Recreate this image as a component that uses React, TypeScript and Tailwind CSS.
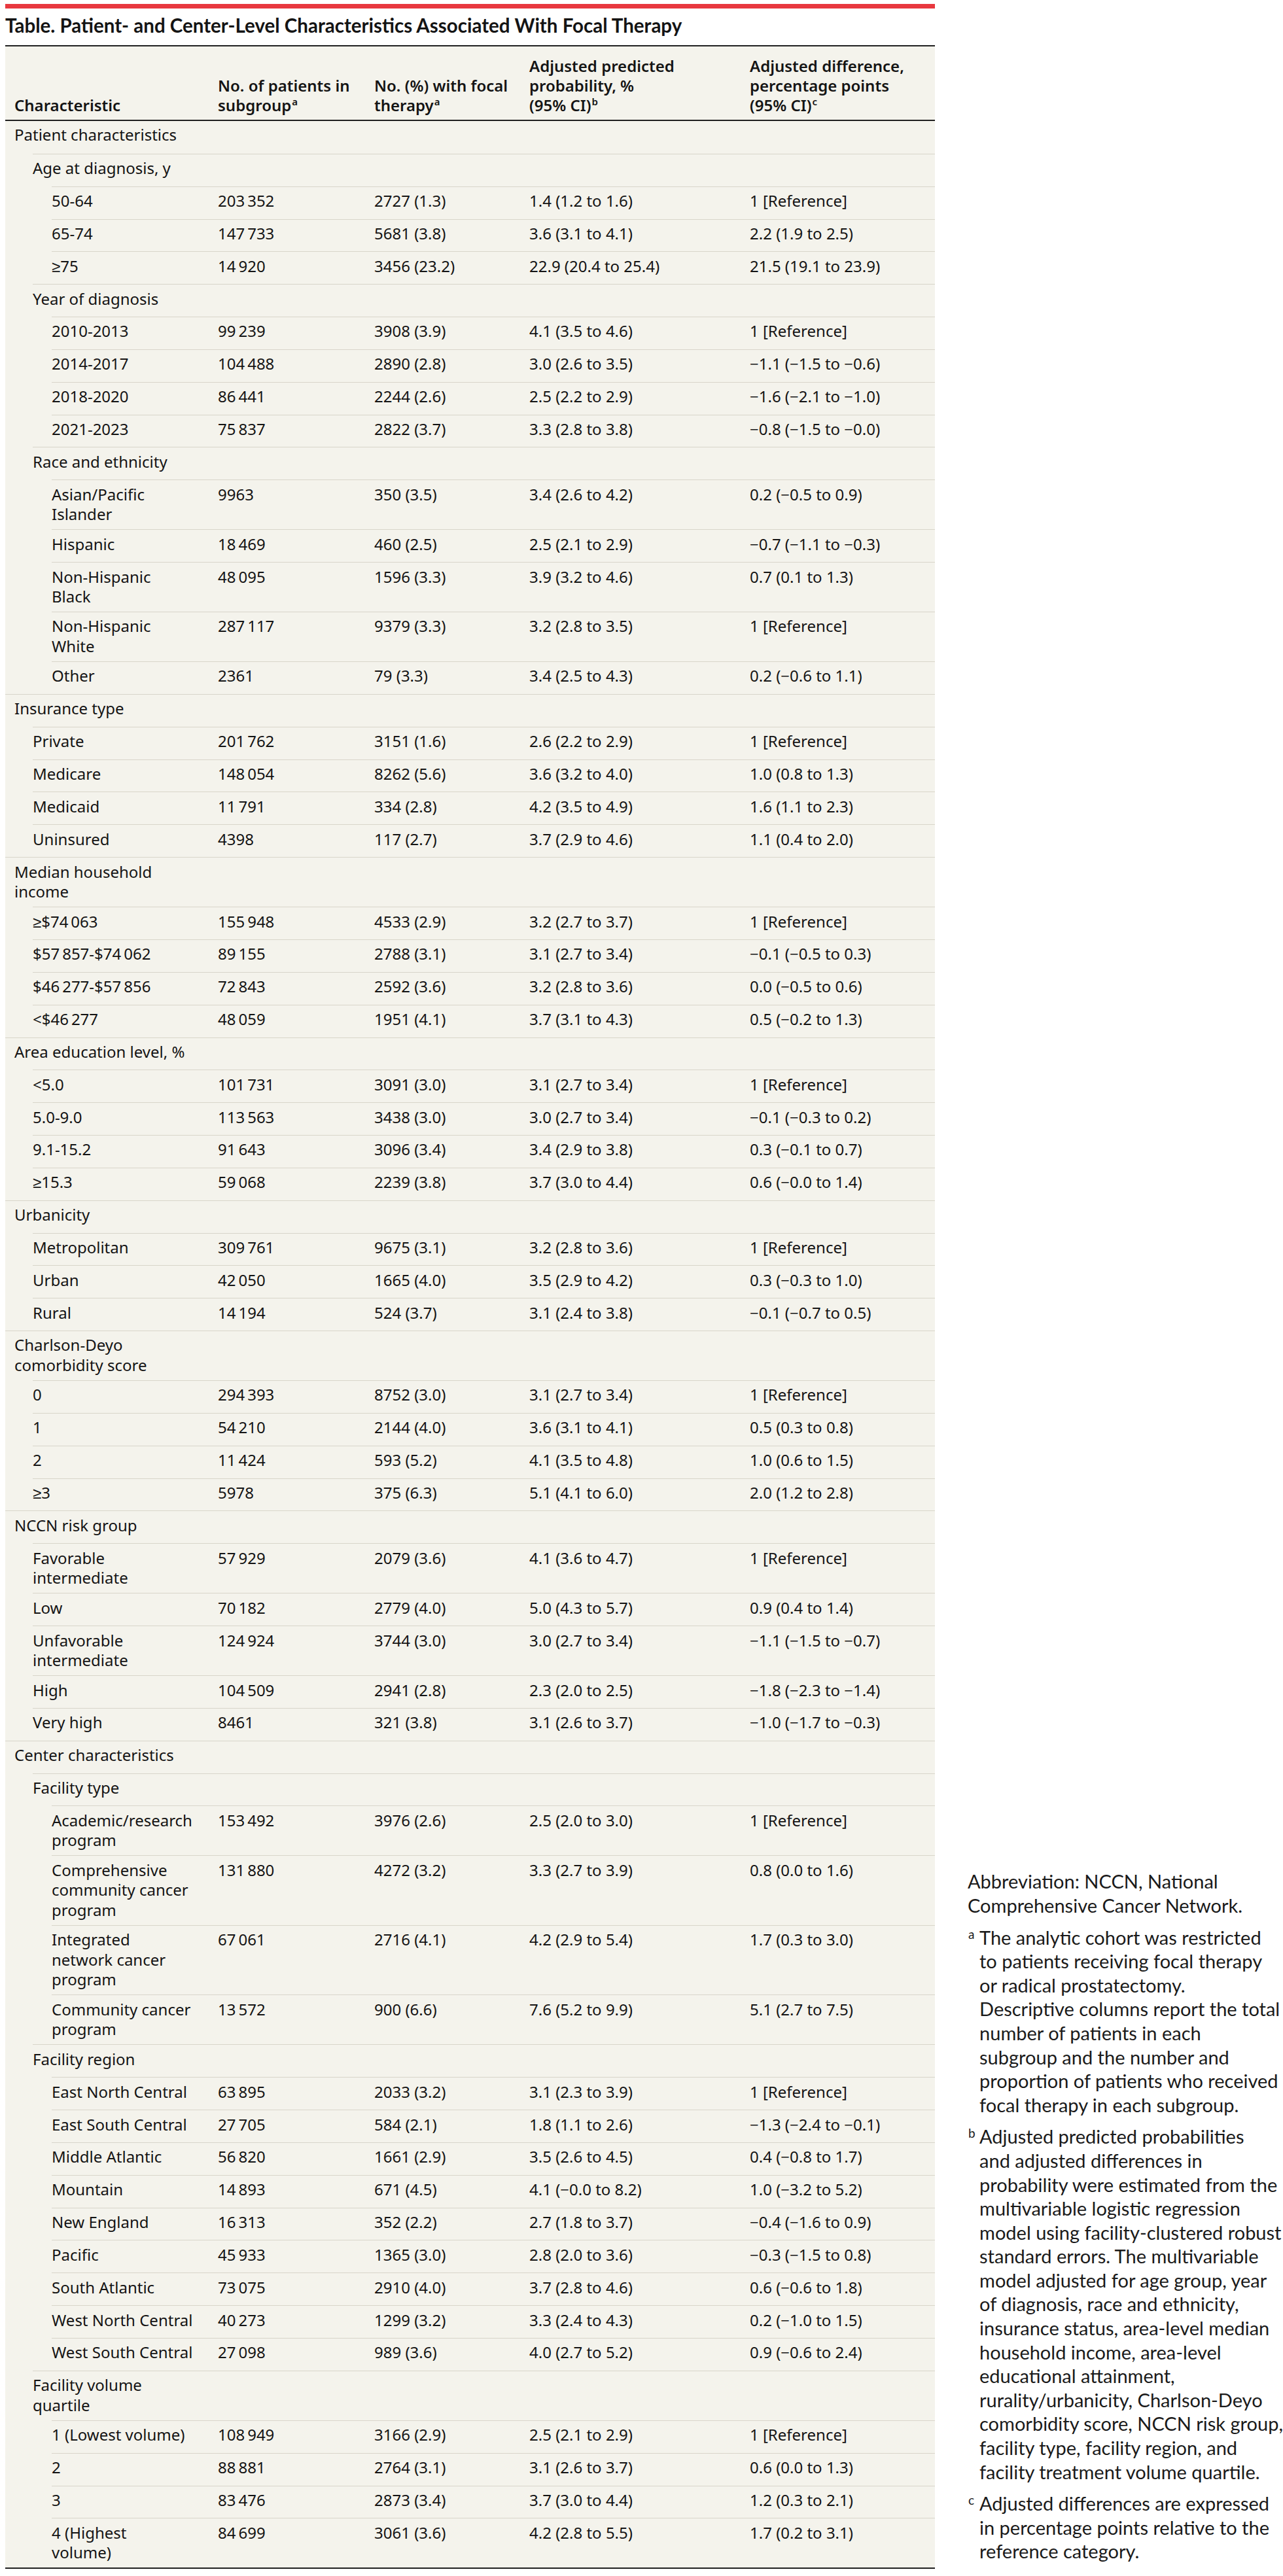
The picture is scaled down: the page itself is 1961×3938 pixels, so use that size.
import React from "react";

type Row = { l: 0 | 1 | 2; c: string | string[]; v?: string[] };

const T = "\u2009";
const n = (s: string) => s.replace(/ (?=\d{3}\b)/g, T);

const rows: Row[] = [
  { l: 0, c: "Patient characteristics" },
  { l: 1, c: "Age at diagnosis, y" },
  { l: 2, c: "50-64", v: ["203 352", "2727 (1.3)", "1.4 (1.2 to 1.6)", "1 [Reference]"] },
  { l: 2, c: "65-74", v: ["147 733", "5681 (3.8)", "3.6 (3.1 to 4.1)", "2.2 (1.9 to 2.5)"] },
  { l: 2, c: "≥75", v: ["14 920", "3456 (23.2)", "22.9 (20.4 to 25.4)", "21.5 (19.1 to 23.9)"] },
  { l: 1, c: "Year of diagnosis" },
  { l: 2, c: "2010-2013", v: ["99 239", "3908 (3.9)", "4.1 (3.5 to 4.6)", "1 [Reference]"] },
  { l: 2, c: "2014-2017", v: ["104 488", "2890 (2.8)", "3.0 (2.6 to 3.5)", "−1.1 (−1.5 to −0.6)"] },
  { l: 2, c: "2018-2020", v: ["86 441", "2244 (2.6)", "2.5 (2.2 to 2.9)", "−1.6 (−2.1 to −1.0)"] },
  { l: 2, c: "2021-2023", v: ["75 837", "2822 (3.7)", "3.3 (2.8 to 3.8)", "−0.8 (−1.5 to −0.0)"] },
  { l: 1, c: "Race and ethnicity" },
  { l: 2, c: ["Asian/Pacific", "Islander"], v: ["9963", "350 (3.5)", "3.4 (2.6 to 4.2)", "0.2 (−0.5 to 0.9)"] },
  { l: 2, c: "Hispanic", v: ["18 469", "460 (2.5)", "2.5 (2.1 to 2.9)", "−0.7 (−1.1 to −0.3)"] },
  { l: 2, c: ["Non-Hispanic", "Black"], v: ["48 095", "1596 (3.3)", "3.9 (3.2 to 4.6)", "0.7 (0.1 to 1.3)"] },
  { l: 2, c: ["Non-Hispanic", "White"], v: ["287 117", "9379 (3.3)", "3.2 (2.8 to 3.5)", "1 [Reference]"] },
  { l: 2, c: "Other", v: ["2361", "79 (3.3)", "3.4 (2.5 to 4.3)", "0.2 (−0.6 to 1.1)"] },
  { l: 0, c: "Insurance type" },
  { l: 1, c: "Private", v: ["201 762", "3151 (1.6)", "2.6 (2.2 to 2.9)", "1 [Reference]"] },
  { l: 1, c: "Medicare", v: ["148 054", "8262 (5.6)", "3.6 (3.2 to 4.0)", "1.0 (0.8 to 1.3)"] },
  { l: 1, c: "Medicaid", v: ["11 791", "334 (2.8)", "4.2 (3.5 to 4.9)", "1.6 (1.1 to 2.3)"] },
  { l: 1, c: "Uninsured", v: ["4398", "117 (2.7)", "3.7 (2.9 to 4.6)", "1.1 (0.4 to 2.0)"] },
  { l: 0, c: ["Median household", "income"] },
  { l: 1, c: "≥$74 063", v: ["155 948", "4533 (2.9)", "3.2 (2.7 to 3.7)", "1 [Reference]"] },
  { l: 1, c: "$57 857-$74 062", v: ["89 155", "2788 (3.1)", "3.1 (2.7 to 3.4)", "−0.1 (−0.5 to 0.3)"] },
  { l: 1, c: "$46 277-$57 856", v: ["72 843", "2592 (3.6)", "3.2 (2.8 to 3.6)", "0.0 (−0.5 to 0.6)"] },
  { l: 1, c: "<$46 277", v: ["48 059", "1951 (4.1)", "3.7 (3.1 to 4.3)", "0.5 (−0.2 to 1.3)"] },
  { l: 0, c: "Area education level, %" },
  { l: 1, c: "<5.0", v: ["101 731", "3091 (3.0)", "3.1 (2.7 to 3.4)", "1 [Reference]"] },
  { l: 1, c: "5.0-9.0", v: ["113 563", "3438 (3.0)", "3.0 (2.7 to 3.4)", "−0.1 (−0.3 to 0.2)"] },
  { l: 1, c: "9.1-15.2", v: ["91 643", "3096 (3.4)", "3.4 (2.9 to 3.8)", "0.3 (−0.1 to 0.7)"] },
  { l: 1, c: "≥15.3", v: ["59 068", "2239 (3.8)", "3.7 (3.0 to 4.4)", "0.6 (−0.0 to 1.4)"] },
  { l: 0, c: "Urbanicity" },
  { l: 1, c: "Metropolitan", v: ["309 761", "9675 (3.1)", "3.2 (2.8 to 3.6)", "1 [Reference]"] },
  { l: 1, c: "Urban", v: ["42 050", "1665 (4.0)", "3.5 (2.9 to 4.2)", "0.3 (−0.3 to 1.0)"] },
  { l: 1, c: "Rural", v: ["14 194", "524 (3.7)", "3.1 (2.4 to 3.8)", "−0.1 (−0.7 to 0.5)"] },
  { l: 0, c: ["Charlson-Deyo", "comorbidity score"] },
  { l: 1, c: "0", v: ["294 393", "8752 (3.0)", "3.1 (2.7 to 3.4)", "1 [Reference]"] },
  { l: 1, c: "1", v: ["54 210", "2144 (4.0)", "3.6 (3.1 to 4.1)", "0.5 (0.3 to 0.8)"] },
  { l: 1, c: "2", v: ["11 424", "593 (5.2)", "4.1 (3.5 to 4.8)", "1.0 (0.6 to 1.5)"] },
  { l: 1, c: "≥3", v: ["5978", "375 (6.3)", "5.1 (4.1 to 6.0)", "2.0 (1.2 to 2.8)"] },
  { l: 0, c: "NCCN risk group" },
  { l: 1, c: ["Favorable", "intermediate"], v: ["57 929", "2079 (3.6)", "4.1 (3.6 to 4.7)", "1 [Reference]"] },
  { l: 1, c: "Low", v: ["70 182", "2779 (4.0)", "5.0 (4.3 to 5.7)", "0.9 (0.4 to 1.4)"] },
  { l: 1, c: ["Unfavorable", "intermediate"], v: ["124 924", "3744 (3.0)", "3.0 (2.7 to 3.4)", "−1.1 (−1.5 to −0.7)"] },
  { l: 1, c: "High", v: ["104 509", "2941 (2.8)", "2.3 (2.0 to 2.5)", "−1.8 (−2.3 to −1.4)"] },
  { l: 1, c: "Very high", v: ["8461", "321 (3.8)", "3.1 (2.6 to 3.7)", "−1.0 (−1.7 to −0.3)"] },
  { l: 0, c: "Center characteristics" },
  { l: 1, c: "Facility type" },
  { l: 2, c: ["Academic/research", "program"], v: ["153 492", "3976 (2.6)", "2.5 (2.0 to 3.0)", "1 [Reference]"] },
  { l: 2, c: ["Comprehensive", "community cancer", "program"], v: ["131 880", "4272 (3.2)", "3.3 (2.7 to 3.9)", "0.8 (0.0 to 1.6)"] },
  { l: 2, c: ["Integrated", "network cancer", "program"], v: ["67 061", "2716 (4.1)", "4.2 (2.9 to 5.4)", "1.7 (0.3 to 3.0)"] },
  { l: 2, c: ["Community cancer", "program"], v: ["13 572", "900 (6.6)", "7.6 (5.2 to 9.9)", "5.1 (2.7 to 7.5)"] },
  { l: 1, c: "Facility region" },
  { l: 2, c: "East North Central", v: ["63 895", "2033 (3.2)", "3.1 (2.3 to 3.9)", "1 [Reference]"] },
  { l: 2, c: "East South Central", v: ["27 705", "584 (2.1)", "1.8 (1.1 to 2.6)", "−1.3 (−2.4 to −0.1)"] },
  { l: 2, c: "Middle Atlantic", v: ["56 820", "1661 (2.9)", "3.5 (2.6 to 4.5)", "0.4 (−0.8 to 1.7)"] },
  { l: 2, c: "Mountain", v: ["14 893", "671 (4.5)", "4.1 (−0.0 to 8.2)", "1.0 (−3.2 to 5.2)"] },
  { l: 2, c: "New England", v: ["16 313", "352 (2.2)", "2.7 (1.8 to 3.7)", "−0.4 (−1.6 to 0.9)"] },
  { l: 2, c: "Pacific", v: ["45 933", "1365 (3.0)", "2.8 (2.0 to 3.6)", "−0.3 (−1.5 to 0.8)"] },
  { l: 2, c: "South Atlantic", v: ["73 075", "2910 (4.0)", "3.7 (2.8 to 4.6)", "0.6 (−0.6 to 1.8)"] },
  { l: 2, c: "West North Central", v: ["40 273", "1299 (3.2)", "3.3 (2.4 to 4.3)", "0.2 (−1.0 to 1.5)"] },
  { l: 2, c: "West South Central", v: ["27 098", "989 (3.6)", "4.0 (2.7 to 5.2)", "0.9 (−0.6 to 2.4)"] },
  { l: 1, c: ["Facility volume", "quartile"] },
  { l: 2, c: "1 (Lowest volume)", v: ["108 949", "3166 (2.9)", "2.5 (2.1 to 2.9)", "1 [Reference]"] },
  { l: 2, c: "2", v: ["88 881", "2764 (3.1)", "3.1 (2.6 to 3.7)", "0.6 (0.0 to 1.3)"] },
  { l: 2, c: "3", v: ["83 476", "2873 (3.4)", "3.7 (3.0 to 4.4)", "1.2 (0.3 to 2.1)"] },
  { l: 2, c: ["4 (Highest", "volume)"], v: ["84 699", "3061 (3.6)", "4.2 (2.8 to 5.5)", "1.7 (0.2 to 3.1)"] },
];

const levels = {
  0: { row: "ml-0", first: "w-[325px] pl-[14px]" },
  1: { row: "ml-[42px]", first: "w-[283px]" },
  2: { row: "ml-[71px]", first: "w-[254px]" },
};

const cols = ["w-[239px]", "w-[237px]", "w-[337px]", "flex-1"];
const cell = "pt-[6.4px] pb-[7.6px] leading-[30.5px] whitespace-nowrap";

function Sup({ children }: { children: React.ReactNode }) {
  return <sup className="text-[15px] top-[-9px] ml-[1px]">{children}</sup>;
}

const notes: { m?: string; lines: string[] }[] = [
  { lines: ["Abbreviation: NCCN, National", "Comprehensive Cancer Network."] },
  {
    m: "a",
    lines: [
      "The analytic cohort was restricted",
      "to patients receiving focal therapy",
      "or radical prostatectomy.",
      "Descriptive columns report the total",
      "number of patients in each",
      "subgroup and the number and",
      "proportion of patients who received",
      "focal therapy in each subgroup.",
    ],
  },
  {
    m: "b",
    lines: [
      "Adjusted predicted probabilities",
      "and adjusted differences in",
      "probability were estimated from the",
      "multivariable logistic regression",
      "model using facility-clustered robust",
      "standard errors. The multivariable",
      "model adjusted for age group, year",
      "of diagnosis, race and ethnicity,",
      "insurance status, area-level median",
      "household income, area-level",
      "educational attainment,",
      "rurality/urbanicity, Charlson-Deyo",
      "comorbidity score, NCCN risk group,",
      "facility type, facility region, and",
      "facility treatment volume quartile.",
    ],
  },
  {
    m: "c",
    lines: [
      "Adjusted differences are expressed",
      "in percentage points relative to the",
      "reference category.",
    ],
  },
];

export default function App() {
  return (
    <div className="flex w-[1961px] min-h-[3938px] bg-white text-[#141414]">
      <div className="ml-2 w-[1447px] pb-[9px] font-['Noto_Sans',sans-serif] text-[24px]">
        <div className="mt-[6px] h-[7px] bg-[#e8383f]" />
        <h1 className="mt-[8px] font-['Lato',sans-serif] text-[29.5px] leading-[36px] font-bold">
          Table. Patient- and Center-Level Characteristics Associated With Focal Therapy
        </h1>

        <div className="mt-[12px] flex h-[116px] items-end border-y-2 border-[#202020] bg-[#f4f3ec] pb-[7px] font-semibold leading-[30px]">
          <div className="w-[325px] pl-[14px]">Characteristic</div>
          <div className="w-[239px]">
            No. of patients in
            <br />
            subgroup<Sup>a</Sup>
          </div>
          <div className="w-[237px]">
            No. (%) with focal
            <br />
            therapy<Sup>a</Sup>
          </div>
          <div className="w-[337px]">
            Adjusted predicted
            <br />
            probability, %
            <br />
            (95% CI)<Sup>b</Sup>
          </div>
          <div className="flex-1">
            Adjusted difference,
            <br />
            percentage points
            <br />
            (95% CI)<Sup>c</Sup>
          </div>
        </div>

        <div className="border-b-2 border-[#202020] bg-[#f4f3ec]">
          {rows.map((r, i) => {
            const lv = levels[r.l];
            const label = Array.isArray(r.c) ? r.c : [r.c];
            return (
              <div
                key={i}
                className={`flex min-h-[49.85px] ${lv.row} ${i > 0 ? "border-t border-[#d8d5ca]" : ""}`}
              >
                <div className={`${cell} ${lv.first}`}>
                  {label.map((t, j) => (
                    <div key={j}>{n(t)}</div>
                  ))}
                </div>
                {cols.map((w, j) => (
                  <div key={j} className={`${cell} ${w}`}>
                    {r.v ? n(r.v[j]) : ""}
                  </div>
                ))}
              </div>
            );
          })}
        </div>
      </div>

      <aside className="ml-[50px] mb-[19px] self-end font-['Lato',sans-serif] text-[29px] leading-[36.6px] text-[#1a1a1a]">
        {notes.map((p, i) => (
          <div key={i} className={`flex ${i > 0 ? "mt-[12px]" : ""}`}>
            {p.m && (
              <span className="w-[18px] shrink-0 pl-[1px] text-[19px] leading-[26px]">{p.m}</span>
            )}
            <div className="whitespace-nowrap">
              {p.lines.map((t, j) => (
                <div key={j}>{t}</div>
              ))}
            </div>
          </div>
        ))}
      </aside>
    </div>
  );
}
